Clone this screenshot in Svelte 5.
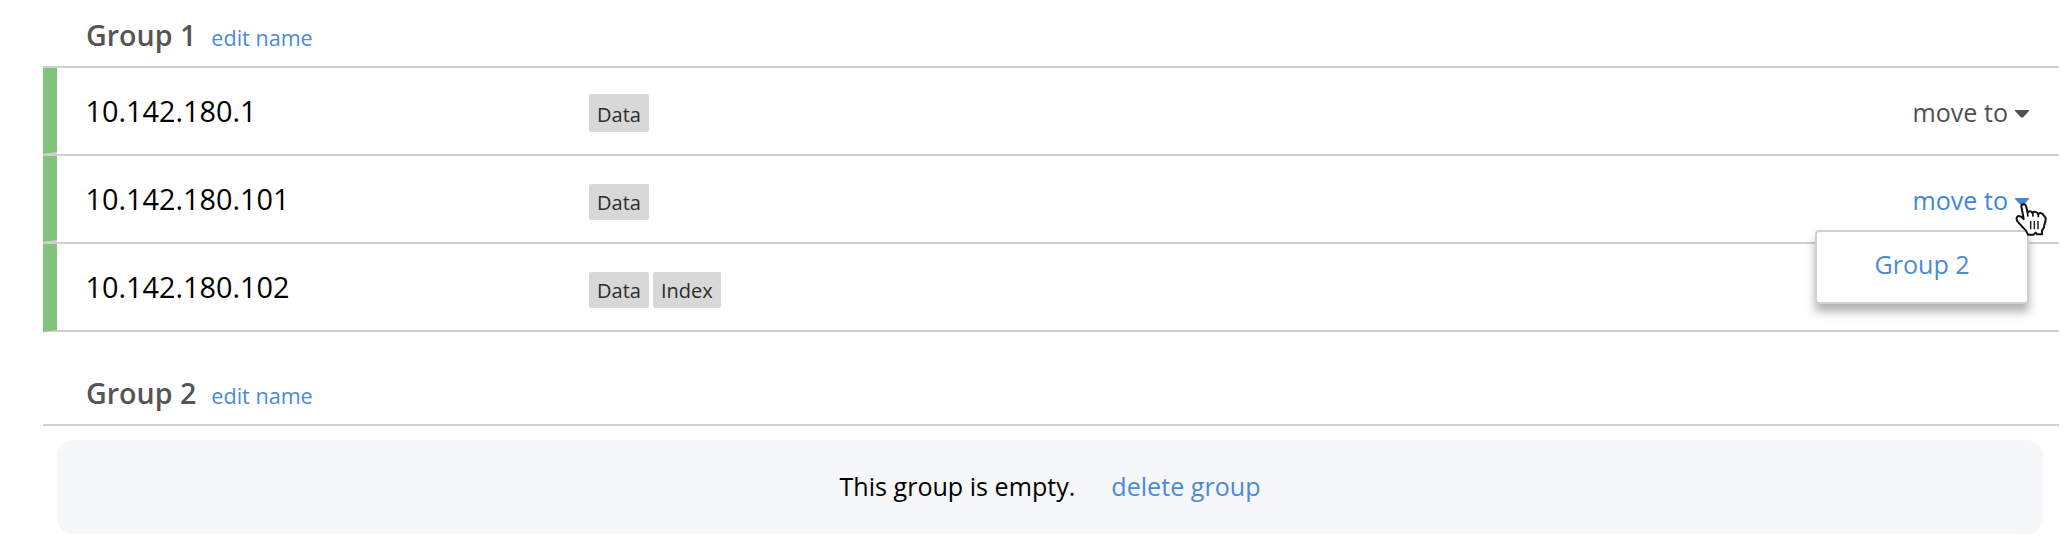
<script>
  const groups = [
    {
      name: 'Group 1',
      servers: [
        { host: '10.142.180.1', services: ['Data'], open: false, covered: false },
        { host: '10.142.180.101', services: ['Data'], open: true, covered: false },
        { host: '10.142.180.102', services: ['Data', 'Index'], open: false, covered: true }
      ]
    },
    { name: 'Group 2', servers: [] }
  ];
</script>

<main>
  {#each groups as group}
    <section>
      <header>
        <h2>{group.name}</h2>
        <a class="edit" href="#edit">edit name</a>
      </header>
      {#each group.servers as server}
        <div class="row">
          <span class="stripe"></span>
          <span class="host">{server.host}</span>
          <div class="tags">
            {#each server.services as service}
              <span class="tag">{service}</span>
            {/each}
          </div>
          <div class="move" class:open={server.open}>
            {#if !server.covered}<span>move to</span>{/if}
            <svg class="caret" width="14" height="8" viewBox="0 0 14 8"><path d="M0 0H14V1L8 7.5H6L0 1Z" fill="currentColor" /></svg>
            {#if server.open}
              <div class="menu"><a href="#group2">Group 2</a></div>
              <svg class="pointer" width="36" height="38" viewBox="0 0 108 114">
                <path d="M29 7C34 7 36 10 37 15L41 32C44 26 53 27 55 33C60 27 69 29 72 36C78 31 86 33 89 40C95 44 96 52 94 58L89 78L84 85V97H70L65 92L59 98H42L36 86C27 77 18 67 11 59C5 50 8 42 15 42C21 42 25 47 29 51L23 18C21 11 23 7 29 7Z" fill="#fff" stroke="#111" stroke-width="6" stroke-linejoin="round" />
                <path d="M40 29L42 44M56 32L57 44M73 35V46" fill="none" stroke="#111" stroke-width="5" />
                <path d="M50 57V82M61 57V82M72 57V82" fill="none" stroke="#222" stroke-width="4.5" />
              </svg>
            {/if}
          </div>
        </div>
      {:else}
        <div class="empty">
          <span>This group is empty.</span>
          <a href="#delete">delete group</a>
        </div>
      {/each}
    </section>
  {/each}
</main>

<style>
  :global(body) {
    background: #fff;
    overflow: hidden;
  }
  main {
    box-sizing: border-box;
    height: 555px;
    padding: 0 11px 0 43px;
    font-family: 'Open Sans', sans-serif;
    color: #000;
  }
  section + section {
    margin-top: 26px;
  }
  a {
    color: #4a8bd8;
    text-decoration: none;
  }
  header {
    box-sizing: border-box;
    height: 68px;
    padding: 15px 0 0 43px;
    display: flex;
    align-items: baseline;
    gap: 15px;
    border-bottom: 2px solid #d0d0d0;
    line-height: 40px;
  }
  h2 {
    margin: 0;
    font-size: 28.6px;
    font-weight: 600;
    color: #555;
  }
  .edit {
    font-size: 21.6px;
  }
  .row {
    display: grid;
    grid-template-columns: 14px 532px 1fr auto;
    height: 86px;
    border-bottom: 2px solid #d0d0d0;
  }
  .stripe {
    background: #82c47b;
    clip-path: polygon(0 0, 100% 0, 100% 84px, 0 100%);
  }
  .row:not(:last-child) {
    background: linear-gradient(#d0d0d0, #d0d0d0) 0 84px / 14px 2px no-repeat;
  }
  .row:last-child .stripe {
    height: 88px;
    clip-path: polygon(0 0, 100% 0, 100% 86px, 0 100%);
  }
  .host {
    padding: 23px 0 0 28.6px;
    font-size: 28.8px;
    line-height: 40px;
  }
  .tags {
    display: flex;
    align-items: flex-start;
    gap: 4px;
    padding-top: 28px;
  }
  .row:nth-child(2) .tags {
    padding-top: 26px;
  }
  .tag {
    height: 36px;
    padding: 0 8px;
    border-radius: 2px;
    background: #d8d8d8;
    color: #2c2c2c;
    font-size: 20px;
    line-height: 38px;
  }
  .row:nth-child(2) .tag {
    height: 38px;
    line-height: 42px;
  }
  .move {
    position: relative;
    display: flex;
    align-items: flex-start;
    gap: 7px;
    padding: 25px 30px 0 0;
    color: #505050;
    font-size: 25.1px;
    line-height: 38px;
  }
  .move.open {
    color: #4287d6;
    z-index: 1;
  }
  .caret {
    margin-top: 17px;
  }
  .menu {
    position: absolute;
    top: 74px;
    right: 30px;
    box-sizing: border-box;
    width: 214px;
    height: 74px;
    border: 2px solid #d0d0d0;
    border-radius: 4px;
    background: #fff;
    box-shadow: 0 8px 10px rgba(0, 0, 0, 0.3);
    text-align: center;
    line-height: 65px;
  }
  .pointer {
    position: absolute;
    top: 46px;
    right: 9px;
  }
  .empty {
    display: flex;
    justify-content: center;
    gap: 36px;
    height: 94px;
    margin: 14px 16px 0 14px;
    border-radius: 16px;
    background: #f5f7f9;
    font-size: 25.1px;
    line-height: 92px;
  }
</style>
